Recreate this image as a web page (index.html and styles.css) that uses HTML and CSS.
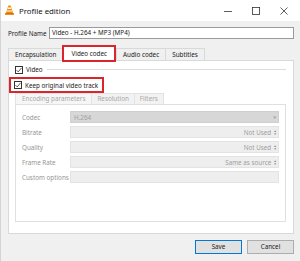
FILE: index.html
```html
<!DOCTYPE html>
<html>
<head>
<meta charset="utf-8">
<link rel="stylesheet" href="styles.css">
</head>
<body>
<div class="window">
  <div class="titlebar">
    <svg class="appicon" width="9" height="10" viewBox="0 0 9 10">
      <path d="M3.4 0.5 L5.6 0.5 L8 8 L1 8 Z" fill="#f28c00"/>
      <path d="M3.0 2.6 L6.0 2.6 L6.4 4 L2.6 4 Z" fill="#fff"/>
      <path d="M2.2 5.4 L6.8 5.4 L7.2 6.6 L1.8 6.6 Z" fill="#fff"/>
      <rect x="0" y="8" width="9" height="1.8" rx="0.4" fill="#e06c00"/>
    </svg>
    <span class="title">Profile edition</span>
    <div class="controls">
      <svg width="10" height="10" viewBox="0 0 10 10"><path d="M1 5.5 H9" stroke="#333" stroke-width="0.8"/></svg>
      <svg width="10" height="10" viewBox="0 0 10 10"><rect x="1.4" y="1.4" width="7.2" height="7.2" fill="none" stroke="#333" stroke-width="0.8"/></svg>
      <svg width="10" height="10" viewBox="0 0 10 10"><path d="M1.5 1.5 L8.5 8.5 M8.5 1.5 L1.5 8.5" stroke="#333" stroke-width="0.8"/></svg>
    </div>
  </div>
  <div class="body">
    <div class="namerow">
      <span class="namelabel">Profile Name</span>
      <div class="nameinput">Video - H.264 + MP3 (MP4)</div>
    </div>
    <div class="tabs">
      <div class="tab">Encapsulation</div>
      <div class="tab active">Video codec</div>
      <div class="tab">Audio codec</div>
      <div class="tab">Subtitles</div>
    </div>
    <div class="panel">
      <div class="group">
        <span class="check"><svg width="8" height="8" viewBox="0 0 8 8"><path d="M1.5 4.2 L3.2 5.9 L6.6 1.8" fill="none" stroke="#333" stroke-width="0.8"/></svg></span>
        <span class="lbl">Video</span>
        <span class="groupline"></span>
      </div>
      <div class="keeprow">
        <span class="check"><svg width="8" height="8" viewBox="0 0 8 8"><path d="M1.5 4.2 L3.2 5.9 L6.6 1.8" fill="none" stroke="#333" stroke-width="0.8"/></svg></span>
        <span class="lbl">Keep original video track</span>
      </div>
      <div class="itabs">
        <div class="itab first">Encoding parameters</div>
        <div class="itab">Resolution</div>
        <div class="itab">Filters</div>
      </div>
      <div class="ipanel">
        <div class="frow">
          <span class="flabel">Codec</span>
          <div class="field combo"><span>H.264</span><span class="arrow">&#9662;</span></div>
        </div>
        <div class="frow">
          <span class="flabel">Bitrate</span>
          <div class="field spin"><span>Not Used</span><span class="spinner">&#9652;<br>&#9662;</span></div>
        </div>
        <div class="frow">
          <span class="flabel">Quality</span>
          <div class="field spin"><span>Not Used</span><span class="spinner">&#9652;<br>&#9662;</span></div>
        </div>
        <div class="frow">
          <span class="flabel">Frame Rate</span>
          <div class="field spin"><span>Same as source</span><span class="spinner">&#9652;<br>&#9662;</span></div>
        </div>
        <div class="frow">
          <span class="flabel">Custom options</span>
          <div class="field"></div>
        </div>
      </div>
    </div>
    <div class="footer">
      <div class="btn default">Save</div>
      <div class="btn">Cancel</div>
    </div>
  </div>
</div>
</body>
</html>
```
FILE: styles.css
```css
* { box-sizing: border-box; }
html, body { margin: 0; padding: 0; }
body {
  width: 300px;
  height: 261px;
  overflow: hidden;
  background: #f0f0f0;
  font-family: "Noto Sans", "DejaVu Sans", sans-serif;
  font-size: 6.3px;
  color: #1a1a1a;
}
.window {
  width: 300px;
  height: 261px;
  border-left: 1px solid #d4d4d4;
}
.titlebar {
  height: 21px;
  background: #fff;
  display: flex;
  align-items: center;
  padding-left: 4px;
}
.appicon { margin-top: -1px; }
.title {
  margin-left: 5px;
  font-size: 7.8px;
  color: #111;
}
.controls {
  margin-left: auto;
  display: flex;
  gap: 18px;
  padding-right: 11px;
}
.body {
  padding: 6px 6px 0 7px;
}
.namerow {
  display: flex;
  align-items: center;
  height: 12px;
}
.namelabel {
  width: 41px;
  color: #222;
}
.nameinput {
  flex: 1;
  height: 12px;
  background: #fff;
  border: 1px solid #9a9a9a;
  padding-left: 2px;
  line-height: 10px;
  color: #222;
}
.tabs {
  display: flex;
  align-items: flex-end;
  height: 14px;
  margin-top: 7px;
}
.tab {
  height: 12px;
  border: 1px solid #d9d9d9;
  border-bottom: none;
  background: #f0f0f0;
  padding: 0 6px;
  line-height: 11px;
  color: #222;
  margin-right: -1px;
}
.tab.active {
  height: 15px;
  background: #fff;
  outline: 2px solid #d8262c;
  outline-offset: -1px;
  margin: 0 1px 0 1px;
  padding: 0 7px;
  position: relative;
  top: 1px;
  line-height: 13px;
}
.panel {
  height: 174px;
  background: #fff;
  border: 1px solid #d9d9d9;
  padding: 4px 7px 0 6px;
}
.group {
  display: flex;
  align-items: center;
  height: 9px;
}
.check {
  width: 8px;
  height: 8px;
  border: 1px solid #333;
  background: #fff;
  display: flex;
}
.check svg { margin: -1px; }
.lbl { margin-left: 3px; color: #222; }
.groupline {
  flex: 1;
  height: 1px;
  background: #dcdcdc;
  margin-left: 4px;
}
.keeprow {
  display: flex;
  align-items: center;
  height: 14px;
  width: 93px;
  margin: 4px 0 0 -5px;
  padding-left: 4px;
  outline: 2px solid #d8262c;
  outline-offset: -1px;
}
.itabs {
  display: flex;
  height: 11px;
  margin-top: 1px;
  align-items: flex-end;
}
.itab {
  height: 11px;
  border: 1px solid #e3e3e3;
  border-bottom: none;
  background: #f2f2f2;
  color: #a8a8a8;
  padding: 0 5px;
  line-height: 10px;
  margin-right: -1px;
}
.itab.first { background: #f6f6f6; padding: 0 6px; }
.ipanel {
  height: 118px;
  border: 1px solid #e0e0e0;
  background: #fff;
  padding: 6px 6px 0 6px;
  display: flex;
  flex-direction: column;
  gap: 3px;
}
.frow {
  display: flex;
  align-items: center;
  height: 12px;
}
.flabel {
  width: 48px;
  color: #959595;
}
.field {
  width: 209px;
  height: 12px;
  background: #eeeeee;
  border: 1px solid #e3e3e3;
  display: flex;
  align-items: center;
  justify-content: flex-end;
  color: #9e9e9e;
  padding-right: 2px;
}
.field.combo {
  background: #d7d7d7;
  border-color: #cfcfcf;
  justify-content: space-between;
  padding-left: 3px;
}
.arrow { font-size: 5px; color: #9a9a9a; }
.spinner {
  font-size: 3.5px;
  line-height: 3.5px;
  margin-left: 3px;
  color: #777;
  text-align: center;
}
.footer {
  display: flex;
  justify-content: flex-end;
  gap: 5px;
  margin-top: 6px;
  padding-right: 0;
}
.btn {
  width: 47px;
  height: 14px;
  background: #e1e1e1;
  border: 1px solid #adadad;
  text-align: center;
  line-height: 12px;
  color: #222;
}
.btn.default {
  border-color: #0078d7;
}
```
